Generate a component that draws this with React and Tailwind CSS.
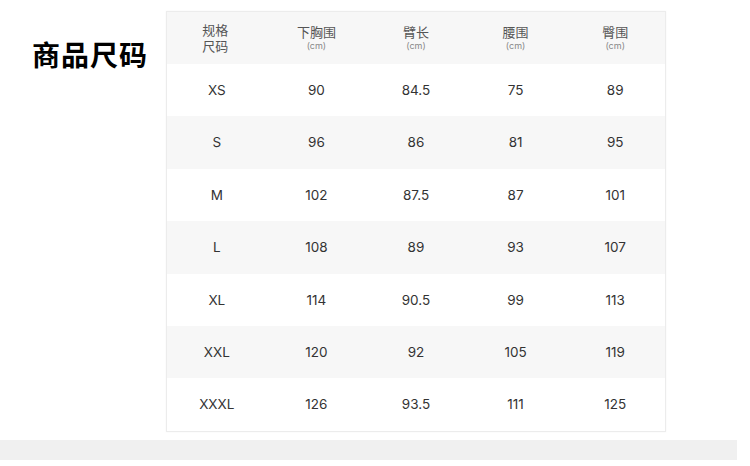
import React from 'react'

const headers = [
  { label: '下胸围' },
  { label: '臂长' },
  { label: '腰围' },
  { label: '臀围' },
]

const rows = [
  ['XS', '90', '84.5', '75', '89'],
  ['S', '96', '86', '81', '95'],
  ['M', '102', '87.5', '87', '101'],
  ['L', '108', '89', '93', '107'],
  ['XL', '114', '90.5', '99', '113'],
  ['XXL', '120', '92', '105', '119'],
  ['XXXL', '126', '93.5', '111', '125'],
]

const App = () => {
  return (
    <div className="w-[750px] h-[466px] bg-white overflow-hidden font-['Inter','Noto_Sans_CJK_SC',sans-serif]">
      <div className="flex pt-[11px]">
        <div className="w-[166px] shrink-0 pl-[32px] pt-[29px]">
          <h1 className="text-[28px] leading-[28px] font-bold text-black font-['Noto_Sans_CJK_SC',sans-serif] tracking-[1px]">商品尺码</h1>
        </div>
        <div className="w-[500px] border border-[#ececec] shadow-[0_0_2px_rgba(0,0,0,0.04)]">
          <div className="flex h-[52px] bg-[#f7f7f7] items-center">
            <div className="w-[100px] flex flex-col items-center text-[13px] leading-[16px] text-[#555] font-['Noto_Sans_CJK_SC',sans-serif] pr-[3px]">
              <span className="block h-[16px] overflow-visible">规格</span>
              <span className="block h-[16px] overflow-visible">尺码</span>
            </div>
            {headers.map((h) => (
              <div key={h.label} className="w-[100px] flex flex-col items-center">
                <span className="block h-[16px] text-[13px] leading-[16px] text-[#555] font-['Noto_Sans_CJK_SC',sans-serif]">{h.label}</span>
                <span className="block h-[12px] text-[9px] leading-[12px] text-[#888]">(cm)</span>
              </div>
            ))}
          </div>
          {rows.map((r, i) => (
            <div key={r[0]} className={`flex h-[52.4px] items-center ${i % 2 === 1 ? 'bg-[#f7f7f7]' : 'bg-white'}`}>
              {r.map((v, j) => (
                <div key={j} className="w-[100px] text-center text-[13.5px] text-[#333]">{v}</div>
              ))}
            </div>
          ))}
        </div>
      </div>
      <div className="mt-[8px] w-[737px] h-[20px] bg-[#f0f0f0]" />
    </div>
  )
}

export default App
